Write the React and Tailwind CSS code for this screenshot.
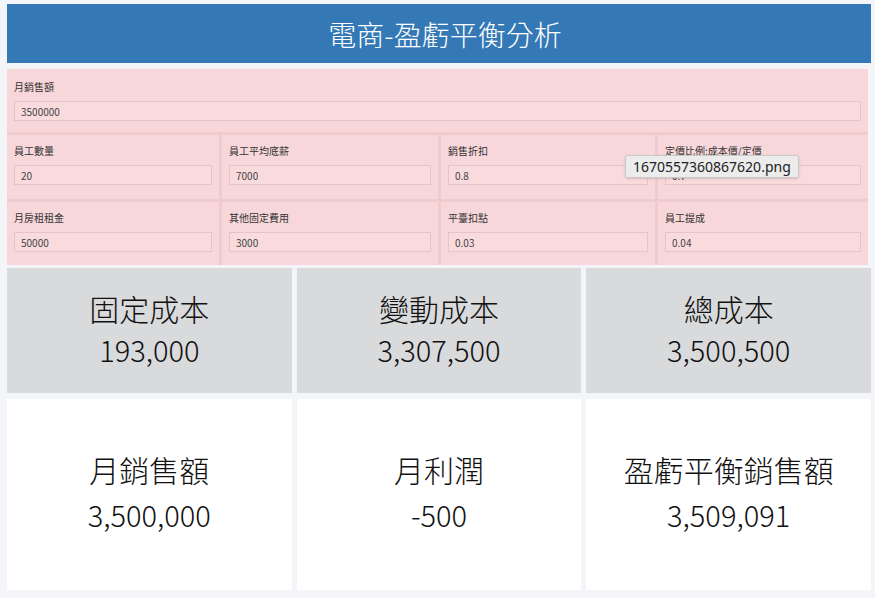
import React, { useState } from 'react';

const FONT = '"Noto Sans CJK TC", "Noto Sans", sans-serif';

function Field({ label, value, onChange, className = '' }) {
  return (
    <div className={`bg-[#f8d7da] px-[7px] ${className}`}>
      <div className="h-[30px] flex items-center text-[10px] text-[#333]">{label}</div>
      <input
        type="text"
        value={value}
        onChange={(e) => onChange(e.target.value)}
        className="block w-full h-[20px] px-[6px] bg-[#f9dadd] border border-[#e6c3c6] text-[10px] text-[#444] outline-none"
      />
    </div>
  );
}

function Stat({ title, value, gray }) {
  return (
    <div className={`flex flex-col items-center justify-center ${gray ? 'bg-[#d9dadc] pb-[6px]' : 'bg-white pb-[8px]'}`}>
      <div className={`text-[30px] leading-[42px] font-light text-[#111] ${gray ? '' : 'mb-[4px]'}`}>{title}</div>
      <div className="text-[29px] leading-[40px] font-light text-[#111]">{value}</div>
    </div>
  );
}

export default function App() {
  const [sales, setSales] = useState('3500000');
  const [staff, setStaff] = useState('20');
  const [salary, setSalary] = useState('7000');
  const [discount, setDiscount] = useState('0.8');
  const [costRatio, setCostRatio] = useState('0.7');
  const [rent, setRent] = useState('50000');
  const [otherFixed, setOtherFixed] = useState('3000');
  const [platformFee, setPlatformFee] = useState('0.03');
  const [commission, setCommission] = useState('0.04');

  // fixed = payroll + rent + other; variable rate = cost/discount + fees
  const fixed = Number(staff) * Number(salary) + Number(rent) + Number(otherFixed);
  const varRate = Number(costRatio) / Number(discount) + Number(platformFee) + Number(commission);
  const variable = Number(sales) * varRate;
  const total = fixed + variable;
  const profit = Number(sales) - total;
  const breakEven = fixed / (1 - varRate);

  const fmt = (n) => Math.round(n).toLocaleString('en-US');

  return (
    <div className="w-[875px] h-[598px] bg-[#f3f5f8] pl-[7px] pr-[4px] pt-[4px] overflow-hidden" style={{ fontFamily: FONT }}>
      <div className="h-[59px] bg-[#3479b6] flex items-center justify-center text-white text-[28px] font-light pl-[12px]">
        電商-盈虧平衡分析
      </div>

      <div className="relative mt-[6px] mr-[3px] bg-[#f0cbce]">
        <Field label="月銷售額" value={sales} onChange={setSales} className="pt-[2px] pb-[11px] mb-[3px]" />
        <div className="grid grid-cols-[212px_216px_214px_1fr] gap-[3px]">
          <Field label="員工數量" value={staff} onChange={setStaff} className="h-[64px]" />
          <Field label="員工平均底薪" value={salary} onChange={setSalary} className="h-[64px]" />
          <Field label="銷售折扣" value={discount} onChange={setDiscount} className="h-[64px]" />
          <Field label="定價比例:成本價/定價" value={costRatio} onChange={setCostRatio} className="h-[64px]" />
          <Field label="月房租租金" value={rent} onChange={setRent} className="h-[63px]" />
          <Field label="其他固定費用" value={otherFixed} onChange={setOtherFixed} className="h-[63px]" />
          <Field label="平臺扣點" value={platformFee} onChange={setPlatformFee} className="h-[63px]" />
          <Field label="員工提成" value={commission} onChange={setCommission} className="h-[63px]" />
        </div>

        {/* file name tooltip */}
        <div
          className="absolute left-[618px] top-[86px] h-[23px] px-[7px] flex items-center bg-[#ececec] border border-[#c9c9c9] rounded-[2px] shadow-sm text-[14px] text-[#222]"
          style={{ fontFamily: '"Noto Sans", sans-serif' }}
        >
          1670557360867620.png
        </div>
      </div>

      <div className="mt-[3px] grid grid-cols-3 grid-rows-[125px_191px] gap-x-[5px] gap-y-[6px]">
        <Stat gray title="固定成本" value={fmt(fixed)} />
        <Stat gray title="變動成本" value={fmt(variable)} />
        <Stat gray title="總成本" value={fmt(total)} />
        <Stat title="月銷售額" value={fmt(Number(sales))} />
        <Stat title="月利潤" value={fmt(profit)} />
        <Stat title="盈虧平衡銷售額" value={fmt(breakEven)} />
      </div>
    </div>
  );
}
